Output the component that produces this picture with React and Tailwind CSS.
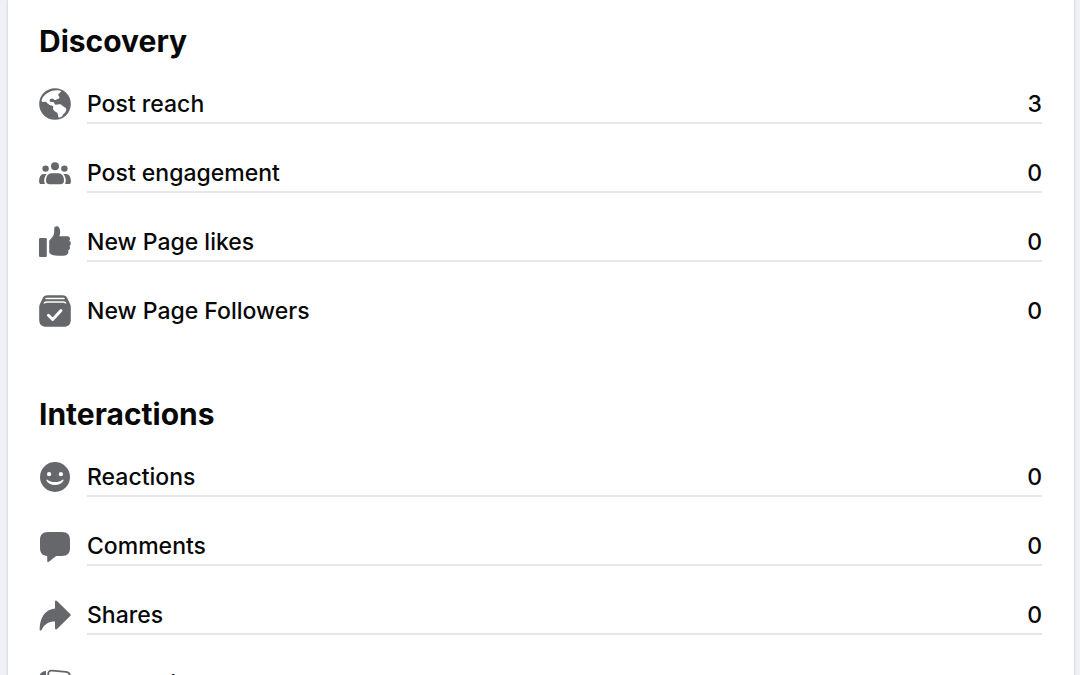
import React from 'react';

const GlobeIcon = () => (
  <>
    <circle cx="16" cy="16" r="15.8" />
    <path
      fill="#fff"
      d="M13.5 2.8C16 1.9 20 1.9 22.2 2.9C22 4.4 19.6 5 19.2 6.8C19.4 8.2 20.8 8.6 20.4 10C19.8 11.2 17.8 10.8 17 12C15.2 12.4 14.6 10.4 12.6 10.4C10.8 10.6 10 12.2 11 13.4C12 14.4 14 13.4 15 14.4C15.6 15.2 15.2 15.8 16 16.6C18 17 20 15.6 22 16.6C23.4 17.4 24 18.6 25.6 19.2C27.2 19.8 27.6 21.2 27 22.8C26.2 25 24.6 25.6 23.8 27C23 28.4 22.2 29.2 20.6 29.6C18.4 29.6 19.4 27 18.6 25.4C17.6 23.8 14.6 23.4 14 20.8C13.8 19.6 14.6 18.8 14 18C12.4 17.2 10.2 17.6 8.6 15.6C7.6 14.2 7.2 13.6 5.6 13.8C4.2 14 3 13.9 2.4 13C3.6 8.2 7.6 4.6 13.5 2.8Z"
    />
  </>
);

const PeopleIcon = () => (
  <>
    <circle cx="16" cy="9.3" r="4" />
    <circle cx="6.6" cy="11.6" r="3.2" />
    <circle cx="25.4" cy="11.6" r="3.2" />
    <path d="M12.5 16.2H19.5C22.8 16.2 25 19.4 25 23.6C25 26.2 23.6 27.2 21.6 27.2H10.4C8.4 27.2 7 26.2 7 23.6C7 19.4 9.2 16.2 12.5 16.2Z" />
    <path d="M4.8 17H7.6C6 19 5.2 21.2 5.2 23.6C5.2 25 5.5 26.2 6 27H2.2C.8 27 .1 26.1 .1 24.4C.1 20.2 1.9 17 4.8 17Z" />
    <path d="M27.2 17H24.4C26 19 26.8 21.2 26.8 23.6C26.8 25 26.5 26.2 26 27H29.8C31.2 27 31.9 26.1 31.9 24.4C31.9 20.2 30.1 17 27.2 17Z" />
  </>
);

const LikeIcon = () => (
  <>
    <rect x="0" y="12" width="7.8" height="19" rx="1.2" />
    <path d="M10.2 15.5C10.2 14.6 10.5 14 11.2 13.4C13.6 11.2 15.2 9 15.2 6V3C15.2 1.2 16.2 .3 17.5 .3C20 .3 21.2 3 21.2 5.8C21.2 7.7 20.8 9 20.3 10.2H28.4C30 10.2 31 11.4 31 12.8C31 13.7 30.7 14.3 30.2 14.8C31.2 15.4 31.8 16.2 31.8 17.4C31.8 18.6 31.2 19.5 30.4 20C30.8 20.5 31 21.1 31 21.8C31 23.1 30.2 24 29.1 24.4C29.3 24.8 29.4 25.2 29.4 25.7C29.4 28 27.6 29.7 24.8 29.7H18.5C15.6 29.7 13.3 29.1 11.6 28C10.6 27.4 10.2 26.7 10.2 25.6Z" />
  </>
);

const FollowersIcon = () => (
  <>
    <path d="M8.5 .2H23.5C26 .2 27.4 1 28.2 3L30.8 8.5C31.6 10 31.8 11 31.8 12.6V24.5C31.8 29.5 29.5 31.8 24.5 31.8H7.5C2.5 31.8 .2 29.5 .2 24.5V12.6C.2 11 .4 10 1.2 8.5L3.8 3C4.6 1 6 .2 8.5 .2Z" />
    <path d="M7 3.6H25M5.4 7.8C6.2 7.3 7 7.1 8 7.1H24C25 7.1 25.8 7.3 26.6 7.8" fill="none" stroke="#fff" strokeWidth="1.5" strokeLinecap="round" />
    <path d="M9.4 20.2L13.7 24.5L22 15.5" fill="none" stroke="#fff" strokeWidth="2.9" strokeLinecap="round" strokeLinejoin="round" />
  </>
);

const SmileIcon = () => (
  <>
    <circle cx="16" cy="16" r="15" />
    <circle cx="10.1" cy="13.2" r="2.1" fill="#fff" />
    <circle cx="21.9" cy="13.2" r="2.1" fill="#fff" />
    <path d="M8.4 18.7C10.3 20.4 13 21 16 21C19 21 21.7 20.4 23.6 18.7C24.2 18.4 24.7 19 24.5 19.6C23.2 22.6 20 24 16 24C12 24 8.8 22.6 7.5 19.6C7.3 19 7.8 18.4 8.4 18.7Z" fill="#fff" />
  </>
);

const CommentIcon = () => (
  <path d="M9 2H23C28.4 2 31 4.8 31 10V18C31 23.2 28.4 26 23 26H17.2L9.8 31.8C9 32.3 8.2 32 8.2 31V26C3.4 25.7 1 22.9 1 18V10C1 4.8 3.6 2 9 2Z" />
);

const ShareIcon = () => (
  <path d="M18 2L31.2 15C31.9 15.7 31.9 16.4 31.2 17.1L18 29.9C17 30.8 16 30.4 16 29.1V22.6C9.8 22.6 5.4 25.2 2.6 30.9C2 32 .6 31.7 .6 30.4C.8 19 5.8 10.3 16 9.5V2.8C16 1.4 17 1.1 18 2Z" />
);

const PhotosIcon = () => (
  <>
    <path d="M7 3C3 3.2 .4 5.5 .4 9.5L2 24C2.3 27 4 28.7 7 29Z" />
    <path d="M13 2.6L27 3.8C29.7 4.1 31 5.5 30.8 8L29.6 25C29.4 27.6 28 28.9 25.4 28.7L13 28C10.4 27.8 9.2 26.5 9.2 24V6.2C9.2 3.7 10.5 2.4 13 2.6Z" fill="none" stroke="#65676b" strokeWidth="1.8" />
  </>
);

const sections = [
  {
    title: 'Discovery',
    rows: [
      { label: 'Post reach', value: 3, Icon: GlobeIcon },
      { label: 'Post engagement', value: 0, Icon: PeopleIcon },
      { label: 'New Page likes', value: 0, Icon: LikeIcon },
      { label: 'New Page Followers', value: 0, Icon: FollowersIcon },
    ],
  },
  {
    title: 'Interactions',
    rows: [
      { label: 'Reactions', value: 0, Icon: SmileIcon },
      { label: 'Comments', value: 0, Icon: CommentIcon },
      { label: 'Shares', value: 0, Icon: ShareIcon },
      { label: 'Photo views', value: 0, Icon: PhotosIcon },
    ],
  },
];

function StatRow({ label, value, Icon }) {
  return (
    <li className="group flex gap-4">
      <svg viewBox="0 0 32 32" fill="#65676b" className="mt-[3px] h-8 w-8 shrink-0" aria-hidden="true">
        <Icon />
      </svg>
      <div className="flex flex-1 justify-between border-b-2 border-[#e6e7ec] pt-px text-[23px] leading-9 font-medium group-last:border-transparent">
        <span>{label}</span>
        <span>{value}</span>
      </div>
    </li>
  );
}

export default function App() {
  return (
    <div className="h-screen overflow-hidden bg-[#f0f1f6] pr-[6px] pl-2 font-['Inter','Liberation_Sans',sans-serif] text-[#080809]">
      <main className="flex min-h-full flex-col gap-[63px] bg-white pt-[21px] pr-8 pl-[31px] shadow-[0_0_3px_rgba(0,0,0,0.2)]">
        {sections.map((section) => (
          <section key={section.title}>
            <h2 className="mb-6 text-[30px] leading-10 font-bold">{section.title}</h2>
            <ul className="flex flex-col gap-[30px]">
              {section.rows.map((row) => (
                <StatRow key={row.label} {...row} />
              ))}
            </ul>
          </section>
        ))}
      </main>
    </div>
  );
}
